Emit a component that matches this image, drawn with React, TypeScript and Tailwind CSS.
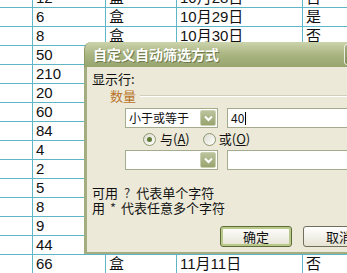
import React from "react";

const rows: string[][] = [
  ["12", "盒", "10月28日", "否"],
  ["6", "盒", "10月29日", "是"],
  ["8", "盒", "10月30日", "否"],
  ["50", "盒", "10月31日", "是"],
  ["210", "盒", "11月1日", "否"],
  ["20", "盒", "11月2日", "是"],
  ["60", "盒", "11月3日", "否"],
  ["84", "盒", "11月4日", "是"],
  ["4", "盒", "11月5日", "否"],
  ["2", "盒", "11月6日", "是"],
  ["5", "盒", "11月7日", "否"],
  ["8", "盒", "11月8日", "是"],
  ["9", "盒", "11月9日", "否"],
  ["44", "盒", "11月10日", "是"],
  ["66", "盒", "11月11日", "否"],
];

function DropBtn() {
  return (
    <div className="w-[16px] h-[16px] mr-[1px] rounded-[2px] border border-[#c9d0b0] bg-gradient-to-b from-[#bac39c] to-[#98a46f] flex items-center justify-center">
      <svg width="9" height="7" viewBox="0 0 9 7">
        <path d="M1 1.5 L4.5 5 L8 1.5" stroke="#ffffff" strokeWidth="2" fill="none" />
      </svg>
    </div>
  );
}

function Radio({ checked }: { checked: boolean }) {
  return (
    <div className="w-[13px] h-[13px] rounded-full border border-[#8c9670] bg-gradient-to-br from-[#dcdccf] to-[#ffffff] flex items-center justify-center">
      {checked && <div className="w-[5px] h-[5px] rounded-full bg-[#5f7a33]" />}
    </div>
  );
}

export default function App() {
  const cjk = { fontFamily: '"Noto Sans CJK SC", "Liberation Sans", sans-serif' };
  return (
    <div
      className="relative w-[347px] h-[273px] overflow-hidden bg-white"
      style={{ fontFamily: '"Liberation Sans", "Noto Sans CJK SC", sans-serif' }}
    >
      <div className="flex flex-col mt-[-11px]">
        {rows.map((r, i) => (
          <div key={i} className="flex h-[19px] border-b border-[#5fb6c6] text-[15px] leading-[18px] text-[#111]">
            <div className="w-[32px] shrink-0" />
            <div className="w-[73px] shrink-0 border-l border-[#5fb6c6] pl-[3px] flex items-center">{r[0]}</div>
            <div className="w-[71px] shrink-0 border-l border-[#5fb6c6] pl-[3px] flex items-center">{r[1]}</div>
            <div className="w-[126px] shrink-0 border-l border-[#5fb6c6] pl-[3px] flex items-center">{r[2]}</div>
            <div className="flex-1 border-l border-[#5fb6c6] pl-[3px] flex items-center">{r[3]}</div>
          </div>
        ))}
      </div>

      <div className="absolute left-[84px] top-[42px] w-[300px] h-[212px] flex flex-col" style={cjk}>
        <div className="h-[25px] shrink-0 rounded-tl-[7px] bg-gradient-to-b from-[#ccd4ac] via-[#aab582] to-[#97a46e] flex items-center pl-[8px] border-l border-[#8e9a68]">
          <span className="text-[14px] font-bold text-white" style={{ textShadow: "1px 1px 0 #6f7a4c" }}>
            自定义自动筛选方式
          </span>
          <div className="ml-auto mr-[19px] w-[21px] h-[21px] rounded-[3px] border border-[#eef0e2] bg-gradient-to-b from-[#a7b184] to-[#7f8b5b] flex items-center justify-center text-white font-bold text-[14px]">
            ?
          </div>
        </div>
        <div className="flex-1 bg-[#ece9d8] border-l-[3px] border-b-[2px] border-[#a3ad80] pl-[5px] flex flex-col text-[13px] text-[#111]">
          <div className="mt-[4px] leading-[16px]">显示行:</div>
          <div className="mt-[1px] flex items-center leading-[16px] pl-[18px]">
            <span className="text-[#b8742a]">数量</span>
            <div className="flex-1 ml-[4px] h-[2px] border-t border-[#d2d0bc] border-b border-b-white" />
          </div>
          <div className="mt-[4px] flex pl-[33px] h-[20px]">
            <div className="w-[93px] h-[20px] bg-white border border-[#a5ac8e] flex items-center justify-between pl-[3px] text-[12px]">
              <span>小于或等于</span>
              <DropBtn />
            </div>
            <div className="ml-[9px] flex-1 h-[20px] bg-white border border-[#a5ac8e] flex items-center pl-[3px] text-[12px]">
              <span>40</span>
              <span className="w-px h-[13px] bg-black ml-[1px]" />
            </div>
          </div>
          <div className="h-[22px] flex items-center pl-[51px] text-[13px]">
            <Radio checked />
            <span className="ml-[4px]">
              与(<span className="underline">A</span>)
            </span>
            <div className="ml-[13px]">
              <Radio checked={false} />
            </div>
            <span className="ml-[3px]">
              或(<span className="underline">O</span>)
            </span>
          </div>
          <div className="flex pl-[33px] h-[20px]">
            <div className="w-[93px] h-[20px] bg-white border border-[#a5ac8e] flex items-center justify-end">
              <DropBtn />
            </div>
            <div className="ml-[9px] flex-1 h-[20px] bg-white border border-[#a5ac8e]" />
          </div>
          <div className="mt-[15px] leading-[15px] flex">
            <span>可用</span>
            <span className="mx-[6px] text-[#333]">?</span>
            <span>代表单个字符</span>
          </div>
          <div className="leading-[15px] flex">
            <span>用</span>
            <span className="mx-[5px] text-[#333]">*</span>
            <span>代表任意多个字符</span>
          </div>
          <div className="mt-[11px] flex pl-[128px]">
            <div className="w-[72px] h-[21px] rounded-[3px] border border-[#5d6b3a] bg-gradient-to-b from-[#ffffff] to-[#e6e3d3] flex items-center justify-center shadow-[inset_0_0_0_2px_#b9c98a]">
              确定
            </div>
            <div className="ml-[11px] w-[72px] h-[21px] rounded-[3px] border border-[#6f6f5a] bg-gradient-to-b from-[#ffffff] to-[#e6e3d3] flex items-center justify-center">
              取消
            </div>
          </div>
        </div>
      </div>
    </div>
  );
}
